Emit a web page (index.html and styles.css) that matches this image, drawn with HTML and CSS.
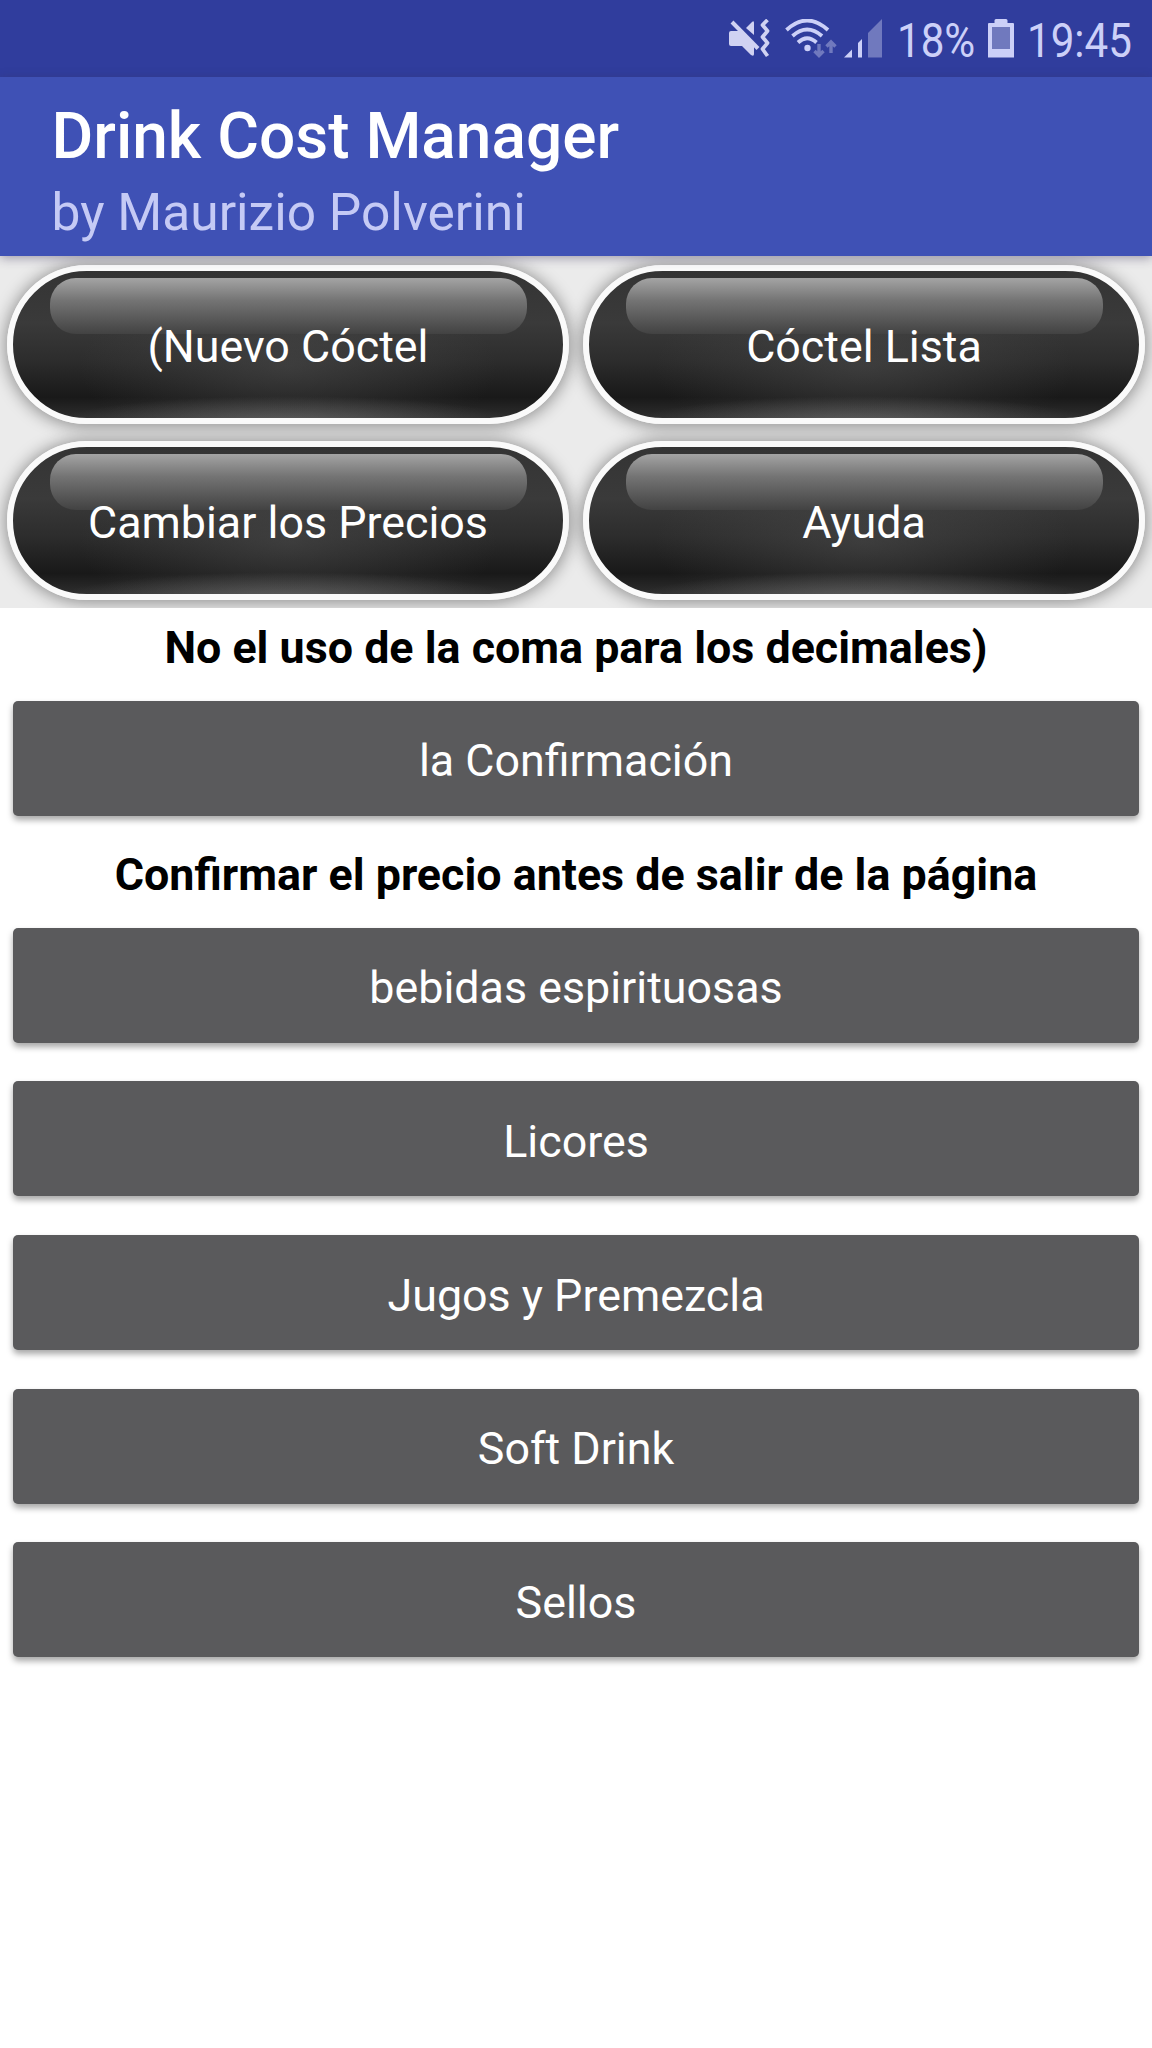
FILE: index.html
```html
<!DOCTYPE html>
<html lang="es">
<head>
    <meta charset="UTF-8">
    <meta name="viewport" content="width=device-width, initial-scale=1.0">
    <title>Drink Cost Manager</title>
    <link rel="stylesheet" href="styles.css">
</head>
<body>
    <div class="status-bar">
        <svg class="icon-mute" width="42" height="40" viewBox="0 0 42 40">
            <path d="M17 9l6-6q2-2 2 1v12z" fill="#d0d2f2"/>
            <path d="M0 14q0-2 2-2h9l14 14v9q0 3-3 1l-9-9H2q-2 0-2-2z" fill="#d0d2f2"/>
            <path d="M3 3l26 26.500" stroke="#d0d2f2" stroke-width="4"/>
            <path d="M38.500 1l-5 5 5 6-5 6 5 6-5 6 5 7" fill="none" stroke="#d0d2f2" stroke-width="3.800" stroke-linejoin="round"/>
        </svg>
        <svg class="icon-wifi" width="54" height="40" viewBox="0 0 54 40">
            <g fill="none" stroke="#ccd0f8" stroke-width="3.800">
                <path d="M1.500 11Q22-8 43 11"/>
                <path d="M7.500 17Q22 4 37 17"/>
                <path d="M13 23.500Q22 15 31.500 23.500"/>
            </g>
            <circle cx="22.500" cy="29" r="3.200" fill="#ccd0f8"/>
            <path d="M34 25v12M29.500 32l4.500 4.500 4.500-4.500M46 34V23M41.500 27.500l4.500-4.500 4.500 4.500" fill="none" stroke="#7079be" stroke-width="3.400"/>
        </svg>
        <svg class="icon-signal" width="40" height="40" viewBox="0 0 40 40">
            <path d="M1 38.500l8-8v8zM15 24l4-4v18.500h-4z" fill="#ccd0f8"/>
            <path d="M25 14L39 0v38.500H25z" fill="#7079be"/>
        </svg>
        <span class="battery-text">18%</span>
        <svg class="icon-battery" width="26" height="40" viewBox="0 0 26 40">
            <path d="M6.500 4V1.500q0-1.500 1.500-1.500h10q1.500 0 1.500 1.500V4H25q1 0 1 1v33.500H0V5q0-1 1-1z" fill="#ccd0f8"/>
            <path d="M4 8h18v22H4z" fill="#7079be"/>
        </svg>
        <span class="clock">19:45</span>
    </div>

    <header>
        <h1>Drink Cost Manager</h1>
        <p>by Maurizio Polverini</p>
    </header>

    <nav class="menu">
        <button class="pill"><span>(Nuevo Cóctel</span></button>
        <button class="pill"><span>Cóctel Lista</span></button>
        <button class="pill"><span>Cambiar los Precios</span></button>
        <button class="pill"><span>Ayuda</span></button>
    </nav>

    <main class="content">
        <p class="note">No el uso de la coma para los decimales)</p>
        <button class="btn">la Confirmación</button>
        <p class="note">Confirmar el precio antes de salir de la página</p>
        <button class="btn">bebidas espirituosas</button>
        <button class="btn">Licores</button>
        <button class="btn">Jugos y Premezcla</button>
        <button class="btn">Soft Drink</button>
        <button class="btn">Sellos</button>
    </main>
</body>
</html>
```
FILE: styles.css
```css
* {
    margin: 0;
    padding: 0;
    box-sizing: border-box;
    font-family: Roboto, "Liberation Sans", sans-serif;
}

body {
    background: #fff;
    min-height: 100vh;
}

.status-bar {
    height: 77px;
    background: #303d9d;
    color: #ccd0f8;
    display: flex;
    align-items: flex-start;
    justify-content: flex-end;
    padding: 19px 20px 0 0;
}

.icon-mute {
    margin-right: 14px;
}

.icon-wifi {
    margin-right: 4px;
}

.icon-signal {
    margin-right: 14px;
}

.battery-text,
.clock {
    font-size: 49px;
    line-height: 43px;
    white-space: nowrap;
    transform: scaleX(0.86);
    transform-origin: left;
}

.battery-text {
    width: 91px;
}

.clock {
    width: 105px;
    margin-left: 13px;
}

header {
    height: 179px;
    background: #3f51b5;
    padding: 22px 51.5px 0;
    position: relative;
    z-index: 1;
    box-shadow: 0 2px 10px rgba(60, 50, 90, 0.45);
}

h1 {
    color: #fff;
    font-size: 64px;
    line-height: 76px;
    font-weight: 500;
}

header p {
    color: #c5caf5;
    font-size: 51.5px;
    line-height: 60px;
    margin-top: 8px;
}

.menu {
    height: 352px;
    background: #ebebeb;
    padding: 9px 0 0 7px;
    display: grid;
    grid-template-columns: 562px 562px;
    grid-template-rows: 159px 159px;
    column-gap: 14px;
    row-gap: 17px;
    overflow: hidden;
}

button {
    border: none;
    color: #fff;
    font-size: 44.8px;
    cursor: pointer;
}

.pill {
    position: relative;
    border: 6px solid #fafafa;
    border-radius: 80px;
    padding-top: 3px;
    background:
        radial-gradient(ellipse 42% 18% at 50% 103%, rgba(140, 140, 140, 0.45), rgba(120, 120, 120, 0) 100%),
        radial-gradient(ellipse 38% 60% at 50% 65%, rgba(80, 80, 80, 0.5), rgba(80, 80, 80, 0) 100%),
        linear-gradient(#343434 0, #3a3a3a 35%, #2d2d2d 60%, #191919 86%, #2e2e2e 100%);
    box-shadow: 0 1px 16px 2px rgba(0, 0, 0, 0.38);
}

/* glass highlight */
.pill::before {
    content: "";
    position: absolute;
    left: 37px;
    right: 36px;
    top: 7px;
    height: 56px;
    border-radius: 26px;
    background: linear-gradient(#a4a4a4, #747474 40%, #424242);
}

.pill span {
    position: relative;
}

.content {
    display: flex;
    flex-direction: column;
    padding: 0 13px;
}

.note {
    height: 73.5px;
    padding-top: 4px;
    line-height: 71px;
    color: #000;
    font-size: 44.8px;
    font-weight: 700;
    text-align: center;
}

.btn {
    height: 115px;
    margin: 19.3px 0;
    padding-top: 5px;
    border-radius: 5px;
    background: #5a5a5c;
    box-shadow: 0 4px 6px rgba(0, 0, 0, 0.35);
}
```
